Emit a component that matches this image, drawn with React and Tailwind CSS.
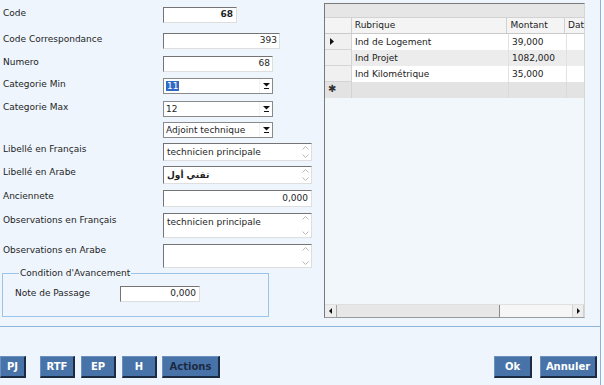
import React from 'react'

// sunken edit box, classic win-forms look
function TextBox({ className, children }) {
  return (
    <div
      className={`bg-white border border-t-[#747474] border-l-[#747474] border-r-[#dedede] border-b-[#dedede] flex items-center ${className}`}
    >
      {children}
    </div>
  )
}

function DropArrow() {
  return (
    <svg width="7" height="6" viewBox="0 0 7 6">
      <path d="M0 0 H7 L3.5 3.5 Z" fill="#111" />
      <rect x="1" y="5" width="5" height="1" fill="#111" />
    </svg>
  )
}

function Combo({ children }) {
  return (
    <div className="w-[110px] h-[16px] bg-white border border-[#8a8a8a] flex items-center">
      <div className="flex-1 pl-[2px] leading-[12px]">{children}</div>
      <div className="w-[13px] h-full flex items-center justify-center border-l border-[#f2f2f2]">
        <DropArrow />
      </div>
    </div>
  )
}

function Spin() {
  return (
    <div className="w-[11px] h-full flex flex-col items-center justify-between py-[2px]">
      <svg width="7" height="4" viewBox="0 0 7 4">
        <path d="M0.5 3.5 L3.5 0.5 L6.5 3.5" stroke="#b9b9b9" fill="none" />
      </svg>
      <svg width="7" height="4" viewBox="0 0 7 4">
        <path d="M0.5 0.5 L3.5 3.5 L6.5 0.5" stroke="#b9b9b9" fill="none" />
      </svg>
    </div>
  )
}

function Memo({ className, children, arabic }) {
  return (
    <div
      className={`w-[149px] bg-white border border-t-[#747474] border-l-[#747474] border-r-[#dedede] border-b-[#dedede] flex ${className}`}
    >
      <div className={`flex-1 pl-[3px] pt-[2px] leading-[12px] ${arabic ? "text-[9px] font-semibold" : ""}`}>{children}</div>
      <Spin />
    </div>
  )
}

function Row({ label, slot, children }) {
  return (
    <div className={`flex items-start ${slot}`}>
      <div className="w-[163px] pl-[3px] leading-[12px]">{label}</div>
      {children}
    </div>
  )
}

function Btn({ children, className = '', dark }) {
  return (
    <div
      className={`h-[22px] flex items-center justify-center bg-[#4873a9] border-t border-l border-[#6b90c0] border-r-2 border-b-2 border-r-[#1c2b44] border-b-[#1c2b44] font-bold text-[10px] ${dark ? 'text-[#1b2a42]' : 'text-white'} ${className}`}
    >
      {children}
    </div>
  )
}

const rows = [
  { rub: 'Ind de Logement', mt: '39,000', bg: 'bg-white', cur: true },
  { rub: 'Ind Projet', mt: '1082,000', bg: 'bg-[#ececec]' },
  { rub: 'Ind Kilométrique', mt: '35,000', bg: 'bg-white' },
]

function Grid() {
  return (
    <div className="w-[261px] h-[315px] mt-[3px] flex flex-col border border-t-[#7a7a7a] border-l-[#7a7a7a] border-r-[#d6d6d6] border-b-[#9a9a9a] bg-[#f2f7fc] text-[#222]">
      <div className="h-[14px] bg-[#e6e6e6] border-b border-[#d2d2d2]" />
      <div className="h-[16px] flex bg-[#f4f4f4] border-b border-[#c9c9c9] leading-[15px]">
        <div className="w-[27px] border-r border-[#d0d0d0]" />
        <div className="w-[157px] pl-[3px] border-r border-[#d0d0d0]">Rubrique</div>
        <div className="w-[58px] pl-[3px] border-r border-[#d0d0d0]">Montant</div>
        <div className="flex-1 pl-[3px] whitespace-nowrap">Dat</div>
      </div>
      {rows.map((r) => (
        <div key={r.rub} className={`h-[16px] flex leading-[16px] ${r.bg}`}>
          <div className="w-[27px] bg-[#f0f0f0] border-r border-b border-[#d4d4d4] flex items-center pl-[5px]">
            {r.cur && (
              <svg width="4" height="7" viewBox="0 0 4 7">
                <path d="M0 0 L4 3.5 L0 7 Z" fill="#111" />
              </svg>
            )}
          </div>
          <div className="w-[157px] pl-[3px] border-r border-[#e2e2e2]">{r.rub}</div>
          <div className="w-[58px] pl-[3px] border-r border-[#e2e2e2]">{r.mt}</div>
          <div className="flex-1" />
        </div>
      ))}
      <div className="h-[16px] flex bg-[#e3e3e3]">
        <div className="w-[27px] border-r border-[#d4d4d4] pl-[3px] leading-[13px] text-[10px] text-[#333]">✱</div>
        <div className="w-[157px] border-r border-[#dadada]" />
        <div className="w-[58px] border-r border-[#dadada]" />
      </div>
      <div className="flex-1" />
      {/* horizontal scrollbar */}
      <div className="h-[13px] flex bg-[#f6f6f6] border-t border-[#e0e0e0]">
        <div className="w-[12px] flex items-center justify-center bg-[#ededed] border-r border-[#a8a8a8]">
          <svg width="3" height="6" viewBox="0 0 3 6">
            <path d="M3 0 L0 3 L3 6 Z" fill="#111" />
          </svg>
        </div>
        <div className="w-[163px] bg-[#e7e7e7] border-r border-[#8a8a8a]" />
        <div className="flex-1" />
        <div className="w-[12px] flex items-center justify-center bg-[#ededed] border-l border-[#d0d0d0] border-r border-[#a8a8a8]">
          <svg width="3" height="6" viewBox="0 0 3 6">
            <path d="M0 0 L3 3 L0 6 Z" fill="#111" />
          </svg>
        </div>
      </div>
    </div>
  )
}

export default function App() {
  return (
    <div className="w-[604px] h-[385px] flex bg-[#eef5fd] font-['DejaVu_Sans',sans-serif] text-[9px] text-[#1e1e1e] overflow-hidden">
      <div className="w-[601px] flex flex-col border-r border-[#86b4e0]">
        <div className="h-[327px] flex border-b border-[#8db5de]">
          {/* form */}
          <div className="w-[324px] pt-[7px] flex flex-col">
            <Row label="Code" slot="h-[26px]">
              <TextBox className="w-[74px] h-[16px] justify-end pr-[3px] font-bold">68</TextBox>
            </Row>
            <Row label="Code Correspondance" slot="h-[23px]">
              <TextBox className="w-[117px] h-[16px] justify-end pr-[2px]">393</TextBox>
            </Row>
            <Row label="Numero" slot="h-[22px]">
              <TextBox className="w-[110px] h-[16px] justify-end pr-[2px]">68</TextBox>
            </Row>
            <Row label="Categorie Min" slot="h-[23px]">
              <Combo>
                <span className="bg-[#316ac5] text-white px-[1px]">11</span>
              </Combo>
            </Row>
            <Row label="Categorie Max" slot="h-[21px]">
              <Combo>12</Combo>
            </Row>
            <Row label="" slot="h-[21px]">
              <Combo>Adjoint technique</Combo>
            </Row>
            <Row label="Libellé en Français" slot="h-[23px]">
              <Memo className="h-[18px]">technicien principale</Memo>
            </Row>
            <Row label="Libellé en Arabe" slot="h-[24px]">
              <Memo className="h-[18px]" arabic>
                <span dir="rtl">تقني أول</span>
              </Memo>
            </Row>
            <Row label="Anciennete" slot="h-[23px]">
              <TextBox className="w-[149px] h-[17px] justify-end pr-[3px]">0,000</TextBox>
            </Row>
            <Row label={<span className="block pt-[1px]">Observations en Français</span>} slot="h-[31px]">
              <Memo className="h-[25px]">technicien principale</Memo>
            </Row>
            <Row label="Observations en Arabe" slot="h-[23px]">
              <Memo className="h-[24px]" />
            </Row>
            <fieldset className="ml-[2px] w-[267px] h-[50px] border border-[#9cc4e8] px-[12px]">
              <legend className="ml-[4px] px-[1px] leading-[12px]">Condition d'Avancement</legend>
              <div className="flex items-start mt-[7px]">
                <div className="w-[105px] pt-[1px] leading-[12px]">Note de Passage</div>
                <TextBox className="w-[80px] h-[16px] justify-end pr-[3px]">0,000</TextBox>
              </div>
            </fieldset>
          </div>
          <Grid />
        </div>
        {/* action bar */}
        <div className="flex-1 flex items-start pt-[29px]">
          <Btn className="w-[26px]">PJ</Btn>
          <Btn className="w-[35px] ml-[14px]">RTF</Btn>
          <Btn className="w-[35px] ml-[6px]">EP</Btn>
          <Btn className="w-[35px] ml-[6px]">H</Btn>
          <Btn className="w-[58px] ml-[5px]" dark>Actions</Btn>
          <div className="flex-1" />
          <Btn className="w-[38px]">Ok</Btn>
          <Btn className="w-[57px] ml-[8px] mr-[3px]">Annuler</Btn>
        </div>
      </div>
      <div className="flex-1 bg-[#f6f9fd]" />
    </div>
  )
}
